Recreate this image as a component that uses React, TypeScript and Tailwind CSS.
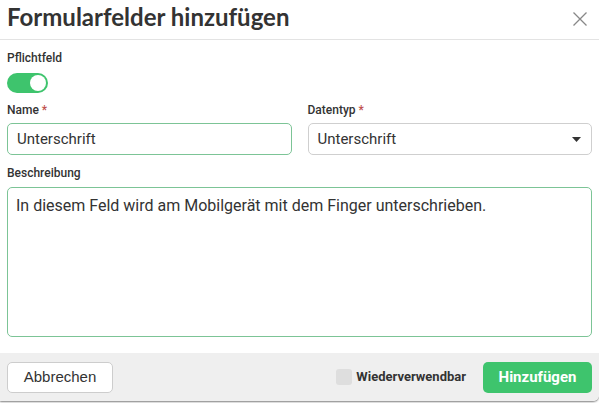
import React from "react";

export default function App() {
  return (
    <div className="w-[599px] h-[403px] bg-white overflow-hidden relative">
      <div className="w-[599px] h-[401px] bg-white rounded-br-[6px] flex flex-col shadow-[0_1px_2px_rgba(0,0,0,0.5)] font-['Roboto',sans-serif] text-[#333]">
        {/* Header */}
        <div className="h-[40px] flex items-center justify-between pl-[7px] pr-[11px] border-b border-[#e3e3e3] shrink-0">
          <div className="font-['Lato',sans-serif] font-bold text-[24px] leading-none text-[#333] -mt-[6px]">Formularfelder hinzufügen</div>
          <svg width="16" height="16" viewBox="0 0 16 16" className="-mt-[1px]">
            <path d="M1.5 1.5 L14.5 14.5 M14.5 1.5 L1.5 14.5" stroke="#888" strokeWidth="1.3" fill="none" />
          </svg>
        </div>
        {/* Body */}
        <div className="flex-1 px-[7px] pt-[11px] flex flex-col">
          <div className="text-[12px] font-medium leading-[14px]">Pflichtfeld</div>
          <div className="mt-[8px] w-[41px] h-[20px] rounded-full bg-[#3ec46d] flex items-center justify-end pr-[2px]">
            <div className="w-[16px] h-[16px] rounded-full bg-white"></div>
          </div>
          <div className="mt-[10px] grid grid-cols-2 gap-x-[16px]">
            <div>
              <div className="text-[12px] font-medium leading-[14px]">
                Name <span className="text-[#c0504d]">*</span>
              </div>
              <div className="mt-[6px] h-[32px] border border-[#7cc496] rounded-[5px] flex items-center pl-[9px] text-[15px]">
                Unterschrift
              </div>
            </div>
            <div>
              <div className="text-[12px] font-medium leading-[14px]">
                Datentyp <span className="text-[#c0504d]">*</span>
              </div>
              <div className="mt-[6px] h-[32px] border border-[#cfcfcf] rounded-[5px] flex items-center justify-between pl-[9px] pr-[10px] text-[15px]">
                <span>Unterschrift</span>
                <svg width="9" height="5" viewBox="0 0 9 5">
                  <path d="M0 0 L9 0 L4.5 5 Z" fill="#333" />
                </svg>
              </div>
            </div>
          </div>
          <div className="mt-[11px] text-[12px] font-medium leading-[14px]">Beschreibung</div>
          <div className="mt-[7px] h-[150px] border border-[#7cc496] rounded-[5px] pl-[8px] pt-[8px] text-[16px] leading-[19px]">
            In diesem Feld wird am Mobilgerät mit dem Finger unterschrieben.
          </div>
        </div>
        {/* Footer */}
        <div className="h-[48px] bg-[#efefef] rounded-br-[6px] flex items-center justify-between px-[7px] shrink-0">
          <button className="w-[106px] h-[31px] bg-white border border-[#cdcdcd] rounded-[5px] text-[15px] text-[#333] font-['Liberation_Sans',sans-serif]">
            Abbrechen
          </button>
          <div className="flex items-center">
            <div className="w-[16px] h-[16px] bg-[#dedede] rounded-[3px]"></div>
            <span className="ml-[4px] text-[13px] font-bold text-[#333]">Wiederverwendbar</span>
            <button className="ml-[17px] w-[109px] h-[31px] bg-[#3ec46d] rounded-[5px] text-[15px] font-bold text-white">
              Hinzufügen
            </button>
          </div>
        </div>
      </div>
    </div>
  );
}
